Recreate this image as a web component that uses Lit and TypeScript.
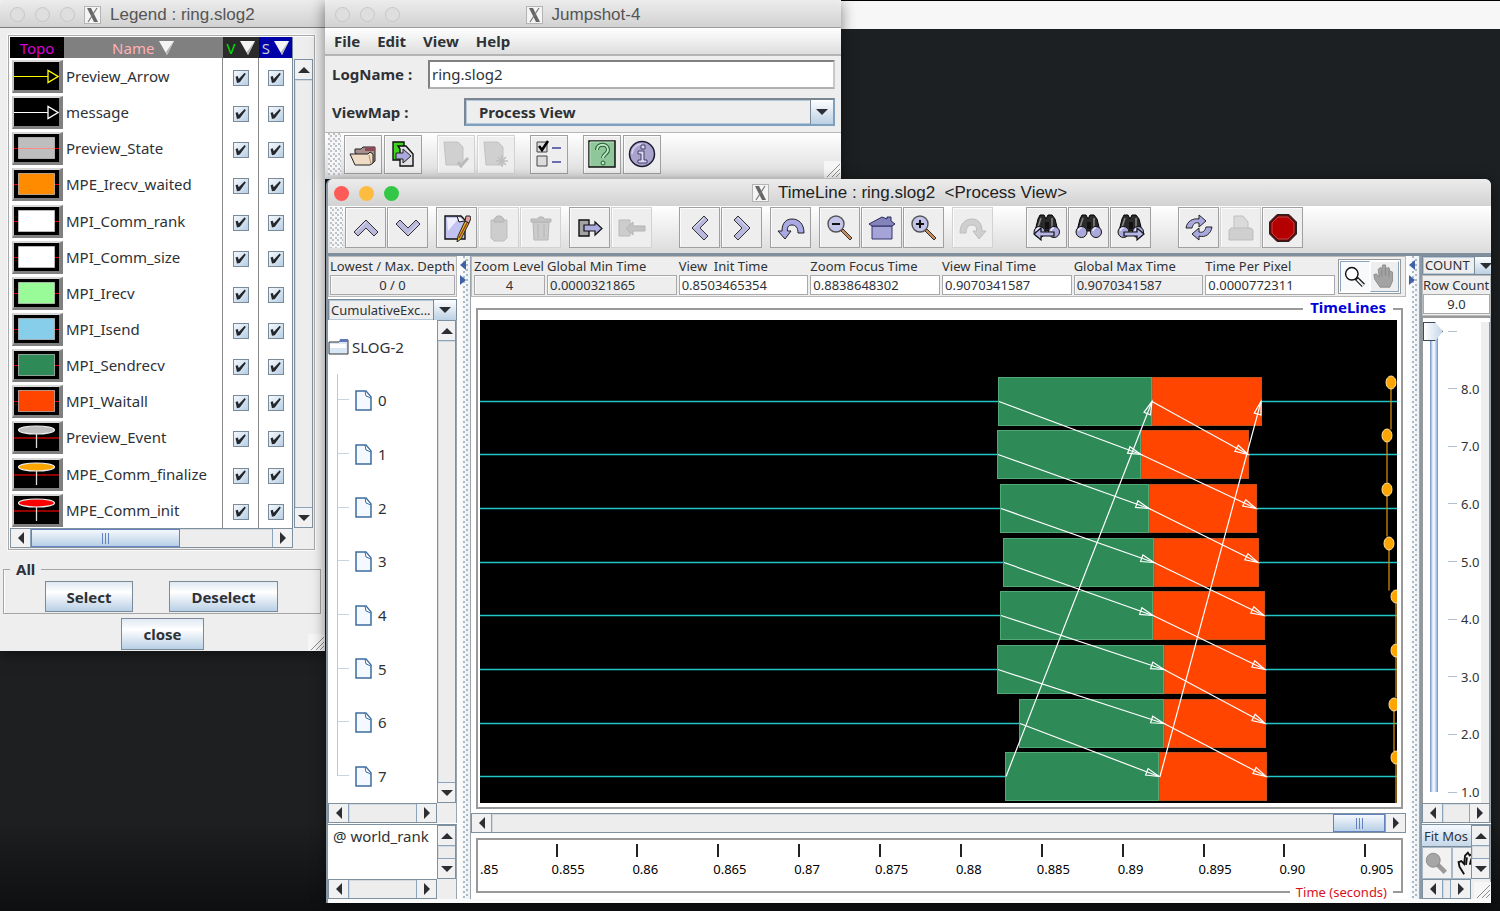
import { LitElement, html, css, svg, nothing } from "lit";
import { customElement, property } from "lit/decorators.js";
import { classMap } from "lit/directives/class-map.js";

type Kind = "arrow" | "state" | "event";
interface Category {
  name: string;
  kind: Kind;
  color: string;
}

const categories: Category[] = [
  { name: "Preview_Arrow", kind: "arrow", color: "#ffff00" },
  { name: "message", kind: "arrow", color: "#ffffff" },
  { name: "Preview_State", kind: "state", color: "#bebebe" },
  { name: "MPE_Irecv_waited", kind: "state", color: "#ff8c00" },
  { name: "MPI_Comm_rank", kind: "state", color: "#ffffff" },
  { name: "MPI_Comm_size", kind: "state", color: "#ffffff" },
  { name: "MPI_Irecv", kind: "state", color: "#98fb98" },
  { name: "MPI_Isend", kind: "state", color: "#87ceeb" },
  { name: "MPI_Sendrecv", kind: "state", color: "#2e8b57" },
  { name: "MPI_Waitall", kind: "state", color: "#ff4500" },
  { name: "Preview_Event", kind: "event", color: "#bebebe" },
  { name: "MPE_Comm_finalize", kind: "event", color: "#ffa500" },
  { name: "MPE_Comm_init", kind: "event", color: "#ff0000" },
];

/* Canvas units: 917 wide, 483 tall, nine equal rows. */
const CANVAS_W = 917;
const CANVAS_H = 483;
const ROW_H = CANVAS_H / 9;

/* Per rank: start of Sendrecv, start of Waitall, end of Waitall, position of finalize event. */
const ranks: [number, number, number, number][] = [
  [518, 672, 782, 911],
  [517, 661, 769, 907],
  [520, 669, 777, 907],
  [523, 674, 779, 909],
  [520, 673, 785, 916],
  [517, 684, 786, 916],
  [539, 684, 786, 914],
  [525, 679, 787, 916],
];

const fields = [
  { label: "Global Min Time", value: "0.0000321865", locked: true },
  { label: "View  Init Time", value: "0.8503465354", locked: false },
  { label: "Zoom Focus Time", value: "0.8838648302", locked: false },
  { label: "View Final Time", value: "0.9070341587", locked: false },
  { label: "Global Max Time", value: "0.9070341587", locked: true },
  { label: "Time Per Pixel", value: "0.0000772311", locked: false },
];

const rulerLabels = [".85", "0.855", "0.86", "0.865", "0.87", "0.875", "0.88", "0.885", "0.89", "0.895", "0.90", "0.905"];
const sliderLabels = ["", "8.0", "7.0", "6.0", "5.0", "4.0", "3.0", "2.0", "1.0"];

const binoculars = svg`
  <path d="M5 5l2-4h4l2 4 2-4h4l3 4 3 12H2z" fill="#2b2b2b" stroke="#000"/>
  <path d="M12 8h4v7h-4z" fill="#111"/><path d="M8 4L5 13M19 4v9" stroke="#8a8a8a" stroke-width="1.500"/>
  <circle cx="6.500" cy="18" r="5.500" fill="#a9a9dc" stroke="#111"/><circle cx="21" cy="18" r="5.500" fill="#a9a9dc" stroke="#111"/>
  <path d="M3.500 17a3 3 0 013-3M18 17a3 3 0 013-3" stroke="#e6e6ff" fill="none" stroke-width="1.500"/>`;

const icons: Record<string, unknown> = {
  up: svg`<path d="M2 18L14 6l12 12-4 4-8-8-8 8z" fill="#b9b9dd" stroke="#333"/><path d="M4 18L14 8" stroke="#dedef2"/>`,
  down: svg`<path d="M2 10l12 12 12-12-4-4-8 8-8-8z" fill="#b9b9dd" stroke="#333"/><path d="M14 20l10-10" stroke="#dedef2"/>`,
  back: svg`<path d="M18 2L6 14l12 12 4-4-8-8 8-8z" fill="#b9b9dd" stroke="#333"/><path d="M18 4L8 14" stroke="#dedef2"/>`,
  forward: svg`<path d="M10 2l12 12-12 12-4-4 8-8-8-8z" fill="#b9b9dd" stroke="#333"/><path d="M10 4l10 10" stroke="#dedef2"/>`,
  edit: svg`<path d="M2 2h16l4 4v19H2z" fill="#c3c3f2" stroke="#111" stroke-width="1.400"/><path d="M4 4h12L5 17z" fill="#eeeeff"/>
    <path d="M14 2l2 6 5-1" fill="#fff" stroke="#111"/><path d="M22 7l4 2-8 16-4 3 1-6z" fill="#e0bd24" stroke="#222"/>
    <path d="M22 7l1-5h4l1 2-2 5z" fill="#e6a0a0" stroke="#222"/><path d="M24 9L16 24" stroke="#a33a18" stroke-width="1.400"/>`,
  paste: svg`<path d="M6 6h16v18l-3 3H9l-3-3z" fill="#cdcdcd" stroke="#bdbdbd"/><path d="M9 8V5l3-3h4l3 3v3z" fill="#c4c4c4" stroke="#b4b4b4"/>`,
  trash: svg`<path d="M6 8h16l-1 18H7z" fill="#cbcbcb" stroke="#b6b6b6"/><path d="M4 5h7l1-2h4l1 2h7v3H4z" fill="#c4c4c4" stroke="#b4b4b4"/><path d="M11 10v14M17 10v14" stroke="#b6b6b6"/>`,
  export: svg`<path d="M3 6h10v16H3z" fill="#a3a3a3" stroke="#111" stroke-width="1.400"/><path d="M8 11h11V8l7 6.500-7 6.500v-4H8z" fill="#adade0" stroke="#111" stroke-width="1.200"/>`,
  import: svg`<path d="M1 6h11v16H1z" fill="#cdcdcd" stroke="#bababa"/><path d="M27 12H15V8l-7 6.500 7 6.500v-4h12z" fill="#c4c4c4" stroke="#b4b4b4"/>`,
  undo: svg`<path d="M1 17h4C5 9 9 5 15 5c7 0 12 5 12 14h-6c0-5-2-8-6-8s-5 3-4.500 6H14l-6 8z" fill="#a9a9e4" stroke="#222"/>`,
  redo: svg`<path d="M27 17h-4C23 9 19 5 13 5 6 5 1 10 1 19h6c0-5 2-8 6-8s5 3 4.500 6H14l6 8z" fill="#cfcfcf" stroke="#bdbdbd"/>`,
  zoomOut: svg`<path d="M15 17l2-2 9 9-2 2z" fill="#c98a5a" stroke="#333"/><circle cx="10" cy="10" r="8" fill="#c4c4ea" stroke="#555" stroke-width="1.400"/><path d="M6 10h8" stroke="#111" stroke-width="2"/>`,
  zoomIn: svg`<path d="M15 17l2-2 9 9-2 2z" fill="#c98a5a" stroke="#333"/><circle cx="10" cy="10" r="8" fill="#c4c4ea" stroke="#555" stroke-width="1.400"/><path d="M6 10h8M10 6v8" stroke="#111" stroke-width="2"/>`,
  home: svg`<path d="M4 12h20v13H4z" fill="#a4a4d8" stroke="#35356c"/><path d="M1 10L14 3l5 2V3h4v4l4 3-3 2H4z" fill="#8484bd" stroke="#2b2b5c"/>`,
  find: binoculars,
  findBack: svg`${binoculars}<path d="M1 20l7-6v4h13v4H8v4z" fill="#b6b6e8" stroke="#111" stroke-width="1.200"/>`,
  findNext: svg`${binoculars}<path d="M27 20l-7-6v4H7v4h13v4z" fill="#b6b6e8" stroke="#111" stroke-width="1.200"/>`,
  refresh: svg`<path d="M1 14C2 7 8 4 14 5V1l7 6-7 6V9c-4-1-6 1-7 5z" fill="#a9a9e0" stroke="#222"/><path d="M27 13c-1 7-7 11-13 9v4l-7-6 7-6v4c4 1 6-1 7-5z" fill="#a9a9e0" stroke="#222"/>`,
  print: svg`<path d="M7 15V2h9l5 6v7" fill="#dadada" stroke="#c0c0c0"/><path d="M2 16l2-2h20l2 2v10H2z" fill="#cfcfcf" stroke="#bdbdbd"/>`,
  stop: svg`<path d="M8 .5h12L27.500 8v12L20 27.500H8L.5 20V8z" fill="#5a0a0a" stroke="#222"/><path d="M9 3h10l6 6v10l-6 6H9l-6-6V9z" fill="#b40000" stroke="#c44"/>`,
  open: svg`<path d="M6 13V9h6l2-2h12v14l-3 3z" fill="#a8918c" stroke="#222"/><path d="M16 7h10v4H16z" fill="#8a4a58"/><path d="M1 14h18l2-2 3 2v9l-3 2H6z" fill="#f0dcc4" stroke="#222"/><path d="M20 15l2 9" stroke="#b58f70"/>`,
  copy: svg`<path d="M4 2h11v18H4z" fill="#41d41c" stroke="#111" stroke-width="1.400"/><path d="M9 6h8l7 8v12H11V9z" fill="#e2e2e2" stroke="#111" stroke-width="1.400"/><path d="M7 13h7V9l8 7-8 7v-4H7z" fill="#a9a9dd" stroke="#222"/>`,
  docCheck: svg`<path d="M2 2h14l5 5v18H4z" fill="#d0d0d0" stroke="#c2c2c2"/><path d="M16 22l3 4 7-8" stroke="#bbb" stroke-width="3" fill="none"/>`,
  docStar: svg`<path d="M2 2h14l5 5v18H4z" fill="#d0d0d0" stroke="#c2c2c2"/><path d="M20 15v12M14 21h12M16 17l8 8M24 17l-8 8" stroke="#bfbfbf" stroke-width="1.600"/>`,
  prefs: svg`<path d="M2 2h10v10H2zM2 16h10v10H2z" fill="#dcdcdc" stroke="#444"/><path d="M4 6l3 4 6-9" stroke="#000" stroke-width="2.500" fill="none"/><path d="M17 8h9M17 22h9" stroke="#6c6cae" stroke-width="2"/>`,
  help: svg`<path d="M1 1h26v26H1z" fill="#8fc79a" stroke="#111" stroke-width="1.500"/><path d="M2 26V2h24" stroke="#b8e2bf" fill="none"/><path d="M9 10c0-7 11-7 11 0 0 4-5 4-5 8" stroke="#245c34" stroke-width="4" fill="none"/><path d="M9 10c0-7 11-7 11 0 0 4-5 4-5 8" stroke="#bfe8c6" stroke-width="2" fill="none"/><circle cx="15" cy="23" r="2" fill="#bfe8c6" stroke="#245c34"/>`,
  info: svg`<circle cx="14" cy="14" r="12.500" fill="#aaa4cc" stroke="#1c1c33" stroke-width="1.500"/><path d="M4 14a10 10 0 0110-10" stroke="#d6d2ee" fill="none" stroke-width="1.500"/><path d="M10 11h6v9h3v3h-9v-3h3v-6h-3zM13 5h4v4h-4z" fill="#d9d6ef" stroke="#44406a"/>`,
  lens: svg`<path d="M16 16l8 8" stroke="#111" stroke-width="5"/><path d="M17 17l7 7" stroke="#eee" stroke-width="2.500"/><circle cx="11" cy="11" r="7" fill="#fff" stroke="#111" stroke-width="1.600"/>`,
  lensOff: svg`<path d="M15 15l9 9" stroke="#999" stroke-width="5"/><circle cx="11" cy="11" r="7.500" fill="#a6a6a6" stroke="#888"/>`,
  hand: svg`<path d="M9 26l-6-9-1-5 3-1 3 4-1-9 2-2 2 1 1-4h3l1 4 3-1 1 4 3 1v10l-3 7z" fill="#a3a3a3" stroke="#8a8a8a"/><path d="M11 6v8M15 4v9M19 7v7" stroke="#858585"/>`,
  grab: svg`<path d="M12 26l-5-8-1-5 3-1 3 3 1-9 3-3 2 3 3-2 1 4" fill="none" stroke="#111" stroke-width="2"/><path d="M15 8l-1 8M20 9l-2 7" stroke="#111" stroke-width="2"/>`,
};

const icon = (name: string, size = 28) =>
  html`<svg class="glyph" width=${size} height=${size} viewBox="0 0 28 28" aria-hidden="true">${icons[name]}</svg>`;

const triangle = (dir: "up" | "down" | "left" | "right") => {
  const d = { up: "M0 7L6 1l6 6z", down: "M0 1h12L6 7z", left: "M7 0v12L1 6z", right: "M1 0l6 6-6 6z" }[dir];
  const flat = dir === "up" || dir === "down";
  return html`<svg width=${flat ? 12 : 8} height=${flat ? 8 : 12} aria-hidden="true"><path d=${d} fill="#2b2f33" /></svg>`;
};

const xBadge = html`<svg class="badge" width="17" height="18" viewBox="0 0 17 18" aria-hidden="true">
  <rect x=".5" y=".5" width="16" height="17" fill="#f4f4f4" stroke="#b4b4b4" />
  <path d="M3 2h4l7 14h-4z" fill="#666" /><path d="M13 2L4 16" stroke="#777" stroke-width="1.200" />
</svg>`;

const grip = html`<svg class="grip" width="17" height="17" viewBox="0 0 17 17" aria-hidden="true">
  <rect width="17" height="17" fill="#f6f6f6" /><path d="M3 16L16 3M8 16l8-8M12 16l4-4" stroke="#8c8c8c" />
</svg>`;

@customElement("metal-scrollbar")
class MetalScrollbar extends LitElement {
  @property({ type: Boolean, reflect: true }) vertical = false;
  @property({ type: Number }) start = 0;
  @property({ type: Number }) size = 0;
  static styles = css`
    :host { display: flex; box-sizing: border-box; min-width: 0; min-height: 0; height: 20px; border: 1px solid #7f909f; background: #ededed; }
    :host([vertical]) { flex-direction: column; width: 19px; height: auto; }
    button { flex: none; display: flex; align-items: center; justify-content: center; padding: 0; border: 0; background: #f1f1f1; width: 19px; height: 18px; }
    :host([vertical]) button { width: 17px; height: 19px; }
    .track { flex: 1; display: flex; min-width: 0; min-height: 0; border: 0 solid #8aa4be; border-width: 0 1px; box-shadow: inset 1px 1px 0 #d4d9de; }
    :host([vertical]) .track { flex-direction: column; border-width: 1px 0; }
    .thumb { box-sizing: border-box; border: 1px solid #6382bf; background: linear-gradient(#f4f8fd, #b8cfe5); display: flex; align-items: center; justify-content: center; gap: 2px; }
    .thumb i { width: 1px; height: 11px; background: #6382bf; }
  `;
  render() {
    const v = this.vertical;
    return html`
      <button aria-label=${v ? "Scroll up" : "Scroll left"}>${triangle(v ? "up" : "left")}</button>
      <div class="track">
        ${this.size
          ? html`<div class="thumb" style="margin-left:${this.start}%;width:${this.size}%"><i></i><i></i><i></i></div>`
          : nothing}
      </div>
      <button aria-label=${v ? "Scroll down" : "Scroll right"}>${triangle(v ? "down" : "right")}</button>
    `;
  }
}

const base = css`
  * { box-sizing: border-box; }
  :host { font: 15px/20px "Noto Sans", sans-serif; color: #2e3236; }
  button, input, select { font: inherit; color: inherit; margin: 0; border-radius: 0; }
  svg { display: block; flex: none; }
  .title { display: flex; align-items: center; height: 28px; background: linear-gradient(#ececec, #d2d2d2); border-bottom: 1px solid #9c9c9c; border-radius: 6px 6px 0 0; font: 17px/20px "Liberation Sans", sans-serif; color: #555; padding: 2px 10px 0; }
  .title h1 { flex: 1; display: flex; align-items: center; justify-content: center; gap: 9px; margin: 0 65px 0 0; font: inherit; white-space: pre; }
  .lights { display: flex; gap: 10px; }
  .lights i { width: 15px; height: 15px; border-radius: 50%; border: 1px solid #c6c6c6; background: #dedede; }
  .tool { display: flex; align-items: center; justify-content: center; padding: 0; border: 1px solid #a0a0a0; background: #eee; box-shadow: inset 1px 1px 0 #fbfbfb; }
  .tool:disabled { border-color: #d2d2d2; }
  .handle { background: radial-gradient(circle at 1px 1px, #bcc2c8 0 1px, transparent 1px) 0 0 / 5px 5px, radial-gradient(circle at 1px 1px, #bcc2c8 0 1px, transparent 1px) 2px 2px / 5px 5px, #f6f6f6; }
  .combo { display: grid; grid-template-columns: 1fr 23px; border: 1px solid #7a8a99; }
  .combo select { grid-area: 1 / 1 / 2 / 3; min-width: 0; appearance: none; border: 1px solid #b4c8dc; background: #eee; }
  .combo span { grid-area: 1 / 2; display: flex; align-items: center; justify-content: center; border-left: 1px solid #7a8a99; background: linear-gradient(#fdfeff, #bcd0e4); pointer-events: none; z-index: 1; }
`;

@customElement("legend-window")
class LegendWindow extends LitElement {
  static styles = [
    base,
    css`
      :host { display: flex; flex-direction: column; background: #eee; }
      .title { border-bottom-color: #7c7c7c; }
      .title h1 { justify-content: flex-start; margin: 0; padding-left: 9px; }
      .pane { margin: 7px 10px 0 8px; padding: 1px; border: 1px solid #a9a9a9; box-shadow: inset 1px 1px 0 #fff, 0 0 0 1px #fafafa; display: grid; grid-template-columns: 1fr 19px; column-gap: 1px; }
      table { height: 491px; width: 100%; border-collapse: collapse; table-layout: fixed; background: #fff; border-right: 1px solid #7a8a99; }
      th, td { padding: 0; font-weight: 400; text-align: left; white-space: nowrap; }
      th { height: 21px; }
      th div { display: flex; align-items: center; justify-content: center; height: 21px; gap: 5px; }
      .h-topo { width: 54px; background: #000; color: #d800d8; }
      .h-name { background: #808080; color: #ffb0b6; }
      .h-v { width: 36px; background: #2b2b2b; color: #00e000; }
      .h-s { width: 34px; background: #0000a8; color: #ccc; }
      .h-v div, .h-s div { gap: 4px; }
      .topo { display: block; margin: 1px 0 0 2px; padding: 0; width: 51px; height: 33px; border: 2px solid; border-color: #d8d8d8 #808080 #808080 #c4c4c4; border-right-width: 4px; border-bottom-width: 3px; background: #000; }
      td.name { padding-left: 2px; border-right: 1px solid #8a8a8a; }
      td.v { border-right: 1px solid #8a8a8a; }
      td.v, td.s { text-align: center; }
      .tick { appearance: none; display: inline-grid; place-content: center; vertical-align: middle; width: 16px; height: 16px; border: 1px solid #7a8a99; outline: 0; background: linear-gradient(135deg, #f4f8fc, #b8cfe5); }
      .tick:checked::before { content: ""; width: 11px; height: 11px; background: #23272b; clip-path: polygon(5% 38%, 25% 32%, 34% 58%, 88% 2%, 98% 14%, 44% 88%, 18% 94%); }
      .side { margin-top: 22px; }
      fieldset { margin: 9px 4px 0 3px; padding: 2px 42px 3px 41px; border: 1px solid #a5a5a5; box-shadow: inset 1px 0 0 #fff; display: flex; justify-content: space-between; height: 55px; min-width: 0; }
      legend { margin-left: -35px; padding: 0 6px; font-weight: 700; }
      .push { height: 31px; border: 1px solid #7a8a99; background: linear-gradient(#dfe9f3, #fff 35%, #b8cfe5); font-weight: 700; padding: 0; }
      .w-select { width: 88px; }
      .w-deselect { width: 109px; }
      .foot { display: flex; justify-content: center; margin-top: 4px; height: 33px; position: relative; }
      .w-close { width: 83px; height: 32px; }
      .grip { position: absolute; right: 0; bottom: 0; }
    `,
  ];
  private topo(c: Category) {
    if (c.kind === "arrow")
      return svg`<path d="M0 14.500h34" stroke=${c.color}/><path d="M34 8.500v12l10-6z" fill="none" stroke=${c.color} stroke-width="1.300"/>`;
    if (c.kind === "state")
      return svg`<path d="M0 14.500h45" stroke="#e00000"/><rect x="4.500" y="3.500" width="36" height="21" fill=${c.color} stroke="#ddd" stroke-opacity=".6"/>${
        c.name === "Preview_State" ? svg`<path d="M4 14.500h37" stroke="#ff8a8a"/>` : nothing
      }`;
    return svg`<path d="M0 15h45" stroke="#c00000" stroke-width="1.500"/><path d="M22.500 8v17" stroke="#ddd" stroke-width="1.300"/><ellipse cx="22.500" cy="7" rx="18" ry="4" fill=${c.color} stroke="#eee" stroke-width="1.200"/>`;
  }
  private sorter() {
    return html`<svg width="15" height="14" aria-hidden="true"><path d="M0 0h15L8 14z" fill="#f4f4f4" /><path d="M15 0L8 14l-1-3z" fill="#b0b0b0" /></svg>`;
  }
  render() {
    return html`
      <div class="title"><div class="lights"><i></i><i></i><i></i></div><h1>${xBadge}Legend : ring.slog2</h1></div>
      <div class="pane">
        <table>
          <thead>
            <tr>
              <th class="h-topo"><div>Topo</div></th>
              <th class="h-name"><div>Name ${this.sorter()}</div></th>
              <th class="h-v"><div>V ${this.sorter()}</div></th>
              <th class="h-s"><div>S ${this.sorter()}</div></th>
            </tr>
          </thead>
          <tbody>
            ${categories.map(
              (c) => html`<tr>
                <td><button class="topo" aria-label="Color of ${c.name}"><svg width="45" height="28">${this.topo(c)}</svg></button></td>
                <td class="name">${c.name}</td>
                <td class="v"><input class="tick" type="checkbox" checked aria-label="${c.name} visible" /></td>
                <td class="s"><input class="tick" type="checkbox" checked aria-label="${c.name} searchable" /></td>
              </tr>`
            )}
          </tbody>
        </table>
        <metal-scrollbar class="side" vertical></metal-scrollbar>
        <metal-scrollbar .start=${0} .size=${62}></metal-scrollbar>
      </div>
      <fieldset>
        <legend>All</legend>
        <button class="push w-select">Select</button><button class="push w-deselect">Deselect</button>
      </fieldset>
      <div class="foot"><button class="push w-close">close</button>${grip}</div>
    `;
  }
}

@customElement("main-window")
class MainWindow extends LitElement {
  static styles = [
    base,
    css`
      :host { display: flex; flex-direction: column; background: #eee; font-weight: 700; }
      nav { display: flex; gap: 17px; height: 28px; padding: 0 7px 0 9px; background: linear-gradient(#fff, #dedede); border-bottom: 2px solid #b4b4b4; }
      nav button { padding: 0; border: 0; background: none; }
      .row { display: flex; align-items: center; padding: 0 6px 0 7px; }
      .log { height: 36px; }
      .log label { width: 96px; }
      .log input { flex: 1; min-width: 0; height: 29px; padding: 0 2px; border: 2px solid; border-color: #808080 #c8c8c8 #b0b0b0 #808080; background: #fff; font-weight: 400; }
      .view { height: 40px; }
      .view label { width: 132px; }
      .view .combo { flex: 1; height: 28px; border: 2px solid; border-color: #7c8690 #7f9fbf #7f9fbf #7c8690; }
      .view select { font-weight: 700; padding: 0 12px; }
      .bar { display: flex; align-items: center; gap: 2px; height: 47px; border-top: 1px solid #b6b6b6; background: linear-gradient(#fff, #dadada); padding: 0 0 4px 3px; position: relative; }
      .handle { width: 13px; align-self: stretch; margin-right: 1px; }
      .tool { width: 38px; height: 39px; }
      .gap { width: 11px; }
      .grip { position: absolute; right: 0; bottom: 1px; }
    `,
  ];
  private tool(name: string, label: string, disabled = false) {
    return html`<button class="tool" aria-label=${label} ?disabled=${disabled}>${icon(name)}</button>`;
  }
  render() {
    return html`
      <div class="title"><div class="lights"><i></i><i></i><i></i></div><h1>${xBadge}Jumpshot-4</h1></div>
      <nav><button>File</button><button>Edit</button><button>View</button><button>Help</button></nav>
      <div class="row log"><label for="log">LogName :</label><input id="log" value="ring.slog2" /></div>
      <div class="row view">
        <label for="map">ViewMap :</label>
        <div class="combo"><select id="map"><option>Process View</option></select><span>${triangle("down")}</span></div>
      </div>
      <div class="bar">
        <div class="handle"></div>
        ${this.tool("open", "Open log")}${this.tool("copy", "Convert log")}
        <div class="gap"></div>
        ${this.tool("docCheck", "Show timeline", true)}${this.tool("docStar", "Show legend", true)}
        <div class="gap"></div>
        ${this.tool("prefs", "Preferences")}
        <div class="gap"></div>
        ${this.tool("help", "Manual")}${this.tool("info", "About")}
        ${grip}
      </div>
    `;
  }
}

type Tool = [string, string, boolean?];
const toolGroups: { tools: Tool[]; space?: "far" | "wide" }[] = [
  { tools: [["up", "Up"], ["down", "Down"]] },
  { tools: [["edit", "Mark"], ["paste", "Move", true], ["trash", "Delete", true]] },
  { tools: [["export", "Expand"], ["import", "Collapse", true]] },
  { tools: [["back", "Backward"], ["forward", "Forward"]], space: "far" },
  { tools: [["undo", "Undo"]] },
  { tools: [["zoomOut", "Zoom out"], ["home", "Zoom home"], ["zoomIn", "Zoom in"]] },
  { tools: [["redo", "Redo", true]] },
  { tools: [["findBack", "Search backward"], ["find", "Search"], ["findNext", "Search forward"]], space: "wide" },
  { tools: [["refresh", "Redraw"], ["print", "Print", true], ["stop", "Exit"]], space: "far" },
];

@customElement("timeline-window")
class TimelineWindow extends LitElement {
  static styles = [
    base,
    css`
      :host { display: flex; flex-direction: column; background: #eee; border-left: 2px solid #8896a3; font-size: 13px; line-height: 18px; border-radius: 6px 6px 0 0; overflow: hidden; }
      .title { height: 27px; color: #222; border: 0; padding: 1px 6px 0; flex: none; }
      .lights i { border-color: transparent; }
      .lights i:nth-child(1) { background: #fc5b57; }
      .lights i:nth-child(2) { background: #fdbc40; }
      .lights i:nth-child(3) { background: #33c748; }
      .bar { flex: none; display: flex; gap: 8px; height: 47px; padding: 1px 0 5px 2px; background: linear-gradient(#fff, #dcdcdc); }
      .handle.lead { width: 13px; margin-right: -6px; }
      .group { display: flex; gap: 1px; }
      .group.far { margin-left: 19px; }
      .group.wide { margin-left: 25px; }
      .bar .tool { width: 41px; height: 41px; }
      .body { flex: 1; min-height: 0; display: grid; grid-template-columns: 129px 14px minmax(0, 1fr) 14px 71px; border-top: 3px solid #7f8f9e; border-bottom: 4px solid #fafafa; background: #fff; }
      .col { display: flex; flex-direction: column; min-width: 0; min-height: 0; }
      .info { background: #eee; border: 1px solid #b9b9b9; height: 41px; flex: none; }
      .info label { display: block; height: 18px; white-space: pre; }
      .field { display: block; width: 100%; min-width: 0; height: 20px; padding: 0 2px; border: 1px solid #a9a9a9; background: #fff; outline: 0; }
      .field.locked { background: #eee; box-shadow: inset 1px 1px 0 #fafafa; }
      .field.mid { text-align: center; }
      .left .info, .right .info { padding: 0 1px; }
      .combo { flex: none; height: 21px; margin-top: 2px; }
      .combo select { padding: 0 1px; font-size: 13px; }
      .view { flex: 1; display: grid; grid-template-columns: minmax(0, 1fr) 19px; grid-template-rows: minmax(0, 1fr) 20px; min-height: 0; background: #eee; border-right: 1px solid #9aa5b0; }
      .view .paper { background: #fff; overflow: hidden; }
      .small { flex: none; height: 75px; margin-top: 1px; border-top: 1px solid #7f909f; font-size: 15px; }
      .small p { margin: 0; padding: 2px 5px 0; white-space: nowrap; }
      .tree { display: grid; grid-auto-rows: 1fr; margin: 0; padding: 0; list-style: none; font-size: 15px; }
      .tree li { display: flex; align-items: center; gap: 2px; }
      .tree .leaf { padding-left: 9px; gap: 6px; }
      .tree .branch { align-self: stretch; width: 12px; display: grid; grid-template-rows: 1fr 1fr; border-left: 1px solid #b4cbe4; }
      .tree .branch i { border-bottom: 1px solid #c8d4e0; }
      .tree .leaf:last-child .branch { border-left: 0; }
      .tree .leaf:last-child .branch i { border-left: 1px solid #b4cbe4; }
      .split { border-right: 1px solid #9aa5b0; background: radial-gradient(circle at 1px 1px, #a9b8c5 0 1px, transparent 1px) 6px 0 / 20px 5px, radial-gradient(circle at 1px 1px, #a9b8c5 0 1px, transparent 1px) 9px 3px / 20px 5px, linear-gradient(90deg, #fff, #eef1f4); }
      .split div { display: grid; gap: 5px; padding: 4px 2px; }
      .mid-info { display: flex; padding: 0 4px 0 2px; }
      .cells { flex: 1; min-width: 0; display: grid; grid-template-columns: 71px repeat(6, minmax(0, 1fr)); gap: 2px; }
      .modes { display: flex; width: 63px; height: 35px; margin: 2px 0 0 3px; padding: 1px; border: 1px solid #999; background: #fff; }
      .modes button { flex: 1; padding: 0; display: grid; place-items: center; border: 1px solid; border-color: #fff #8aa4be #8aa4be #fff; background: #eee; }
      .modes .on { border-color: #8aa4be #fff #fff #8aa4be; background: #f7f9fb; }
      .stage { flex: 1; min-height: 0; margin: 11px 3px 4px 5px; padding: 10px 4px 4px 2px; border: 2px solid #999; display: grid; grid-template: minmax(0, 1fr) / minmax(0, 1fr); }
      .stage h2 { grid-area: 1 / 1; justify-self: end; align-self: start; margin: -22px 4px 0 0; padding: 0 7px; font-size: 15px; line-height: 18px; color: #0000d8; background: #fff; z-index: 1; }
      .stage svg { grid-area: 1 / 1; width: 100%; height: 100%; background: #000; }
      .ruler { flex: none; margin: 5px 3px 6px 5px; height: 55px; padding: 4px 4px 0 2px; border: 2px solid #999; display: flex; flex-direction: column; justify-content: space-between; }
      .marks { display: flex; overflow: hidden; color: #000; }
      .marks div { flex: none; width: 8.82%; }
      .marks div:first-child { width: 7.8%; }
      .marks i { display: block; width: 2px; height: 13px; margin-left: 4px; background: #222; }
      .marks div:first-child i { visibility: hidden; }
      .marks span { display: block; margin-top: 3px; }
      .unit { align-self: flex-end; margin: 0 4px -9px 0; padding: 0 6px; background: #fff; color: #d8101c; line-height: 16px; }
      .right { border-left: 2px solid #8a99a6; overflow: hidden; }
      .right .combo { height: 19px; margin: 0; width: 76px; }
      .right .combo select { padding: 0 1px; line-height: 15px; }
      .right .info { padding: 0; }
      .gauge { display: flex; height: 100%; padding-top: 4px; border-left: 1px solid #999; border-top: 2px solid #999; }
      .gauge input { appearance: none; writing-mode: vertical-lr; direction: rtl; width: 20px; height: auto; margin: 0 0 2px; background: linear-gradient(90deg, #6d8fc8, #d7e4f4 30%, #fff 50%, #a9c1e6 80%, #6d8fc8) 7px 50% / 8px calc(100% - 18px) no-repeat; }
      .gauge input::-webkit-slider-thumb { appearance: none; width: 20px; height: 19px; background: linear-gradient(90deg, #fff, #c5d6e8); border: 1px solid #3d4a58; clip-path: polygon(0 0, 60% 0, 100% 50%, 60% 100%, 0 100%); }
      .scale { flex: 1; display: flex; flex-direction: column; justify-content: space-between; padding: 0 0 2px 5px; }
      .scale div { display: flex; align-items: center; gap: 4px; height: 18px; }
      .scale i { width: 9px; height: 1px; background: #b3c0cc; }
      .edge { width: 9px; background: #eee; border-right: 1px solid #999; }
      .wide-cell { grid-column: 1 / 3; }
      .fit { display: flex; flex-direction: column; }
      .fit b { flex: none; height: 22px; padding: 0 2px; font-weight: 400; font-size: 13px; line-height: 22px; white-space: nowrap; background: linear-gradient(#f5f9fd, #c5d7e9); border-bottom: 1px solid #7a8a99; }
      .fit div { display: flex; flex: 1; }
      .fit button { flex: none; width: 30px; padding: 0; border: 1px solid #a9b8c6; background: #f2f2f2; }
      .grip { position: absolute; right: 0; bottom: 4px; }
    `,
  ];

  private y(row: number) {
    return Math.round((row + 1.5) * ROW_H) + 0.5;
  }
  private message(x1: number, r1: number, x2: number, r2: number) {
    const y1 = this.y(r1), y2 = this.y(r2);
    const a = Math.atan2(y2 - y1, x2 - x1);
    const px = (d: number, s: number) =>
      `${(x2 - d * Math.cos(a) - s * Math.sin(a)).toFixed(1)} ${(y2 - d * Math.sin(a) + s * Math.cos(a)).toFixed(1)}`;
    return svg`<path d="M${x1} ${y1}L${x2} ${y2}"/><path d="M${x2} ${y2}L${px(13, 3.5)}L${px(13, -3.5)}z"/>`;
  }
  private chart() {
    const last = ranks.length - 1;
    return html`<svg viewBox="0 0 ${CANVAS_W} ${CANVAS_H}" preserveAspectRatio="none" role="img" aria-label="Timelines of ranks 0 to 7">
      ${ranks.map(([a, b, c], i) => {
        const y = this.y(i);
        return svg`<path d="M0 ${y}H${CANVAS_W}" stroke="#22c4c4" stroke-width="1.500"/>
          <rect x=${a + 0.5} y=${y - 24} width=${b - a - 1} height="48" fill="#2e8b57" stroke="#52a877"/>
          <rect x=${b + 0.5} y=${y - 24} width=${c - b - 1} height="48" fill="#ff4500" stroke="#c8501c"/>`;
      })}
      <g fill="none" stroke="#fff" stroke-width="1.200">
        ${ranks.slice(0, last).map(([a, b], i) => [
          this.message(a + 1, i, ranks[i + 1][1], i + 1),
          this.message(b, i, ranks[i + 1][2] - 1, i + 1),
        ])}
        ${this.message(ranks[last][0] + 1, last, ranks[0][1], 0)}
        ${this.message(ranks[last][1] + 1, last, ranks[0][2] - 1, 0)}
      </g>
      ${ranks.map(([, , , x], i) => {
        const y = this.y(i) - 19;
        return svg`<path d="M${x} ${y}v47" stroke="#d08a10" stroke-width="1.300"/><ellipse cx=${x} cy=${y} rx="5" ry="6.500" fill="#ffa500" stroke="#ffe0a0"/>`;
      })}
    </svg>`;
  }
  private splitter() {
    return html`<div class="split"><div>
      <svg width="8" height="10"><path d="M7 0v10L1 5z" fill="#4060a8" /></svg>
      <svg width="8" height="10"><path d="M1 0v10l6-5z" fill="#4060a8" /></svg>
    </div></div>`;
  }
  render() {
    return html`
      <div class="title"><div class="lights"><i></i><i></i><i></i></div><h1>${xBadge}TimeLine : ring.slog2  &lt;Process View&gt;</h1></div>
      <div class="bar">
        <div class="handle lead"></div>
        ${toolGroups.map(
          (g) => html`<div class=${classMap({ group: true, far: g.space === "far", wide: g.space === "wide" })}>
            ${g.tools.map(([n, l, off]) => html`<button class="tool" aria-label=${l} ?disabled=${!!off}>${icon(n)}</button>`)}
          </div>`
        )}
      </div>
      <div class="body">
        <div class="col left">
          <div class="info"><label for="depth">Lowest / Max. Depth</label><input id="depth" class="field locked mid" readonly value="0 / 0" /></div>
          <div class="combo"><select aria-label="Preview mode"><option>CumulativeExc...</option></select><span>${triangle("down")}</span></div>
          <div class="view">
            <ul class="paper tree">
              <li>
                <svg width="22" height="18" aria-hidden="true"><path d="M1 4h10l2-2h7v14H1z" fill="#d9e7f5" stroke="#333" /><path d="M12 1h8v3h-9z" fill="#6078b8" /><path d="M2 6h16v4H2z" fill="#fff" /></svg>
                SLOG-2
              </li>
              ${ranks.map(
                (_, i) => html`<li class="leaf">
                  <span class="branch"><i></i></span>
                  <svg width="17" height="21" aria-hidden="true"><path d="M1 1h10l5 6v13H1z" fill="#f4f9ff" stroke="#3c6ca0" stroke-width="1.500" /><path d="M10 1l1 5 5 2" fill="#fff" stroke="#3c6ca0" /></svg>
                  ${i}
                </li>`
              )}
            </ul>
            <metal-scrollbar vertical></metal-scrollbar>
            <metal-scrollbar></metal-scrollbar>
          </div>
          <div class="view small">
            <div class="paper"><p>@ world_rank</p></div>
            <metal-scrollbar vertical></metal-scrollbar>
            <metal-scrollbar></metal-scrollbar>
          </div>
        </div>
        ${this.splitter()}
        <div class="col">
          <div class="info mid-info">
            <div class="cells">
              <div><label for="zoom">Zoom Level</label><input id="zoom" class="field locked mid" readonly value="4" /></div>
              ${fields.map(
                (f, i) => html`<div>
                  <label for="f${i}">${f.label}</label>
                  <input id="f${i}" class=${classMap({ field: true, locked: f.locked })} ?readonly=${f.locked} value=${f.value} />
                </div>`
              )}
            </div>
            <div class="modes"><button class="on" aria-label="Zoom mode">${icon("lens", 25)}</button><button aria-label="Drag mode">${icon("hand", 25)}</button></div>
          </div>
          <div class="stage"><h2>TimeLines</h2>${this.chart()}</div>
          <metal-scrollbar .start=${94.2} .size=${6}></metal-scrollbar>
          <div class="ruler">
            <div class="marks">${rulerLabels.map((t) => html`<div><i></i><span>${t}</span></div>`)}</div>
            <div class="unit">Time (seconds)</div>
          </div>
        </div>
        ${this.splitter()}
        <div class="col right">
          <div class="combo"><select aria-label="Row unit"><option>COUNT</option></select><span>${triangle("down")}</span></div>
          <div class="info"><label for="rows">Row Count</label><input id="rows" class="field mid" value="9.0" /></div>
          <div class="view">
            <div class="paper wide-cell">
              <div class="gauge">
                <input type="range" min="1" max="9" step="0.1" value="9" aria-label="Visible rows" />
                <div class="scale">${sliderLabels.map((t) => html`<div><i></i>${t}</div>`)}</div>
                <div class="edge"></div>
              </div>
            </div>
            <metal-scrollbar class="wide-cell"></metal-scrollbar>
          </div>
          <div class="view small">
            <div class="paper fit"><b>Fit Mos</b><div><button aria-label="Fit most rows">${icon("lensOff", 26)}</button><button aria-label="Grab">${icon("grab", 26)}</button></div></div>
            <metal-scrollbar vertical></metal-scrollbar>
            <metal-scrollbar></metal-scrollbar>
          </div>
        </div>
      </div>
      ${grip}
    `;
  }
}

@customElement("app-root")
class AppRoot extends LitElement {
  static styles = css`
    :host { display: block; position: relative; height: 100vh; min-height: 640px; overflow: hidden; background: linear-gradient(#1d2022, #1d1f21 90%, #0e0f10); }
    .menubar { height: 28px; background: #f7f7f7; border-top: 1px solid #000; }
    legend-window, main-window, timeline-window { position: absolute; box-shadow: 0 3px 14px rgba(0, 0, 0, 0.5); }
    legend-window { left: 0; top: 0; width: 325px; }
    main-window { left: 325px; top: 0; width: 516px; }
    timeline-window { left: 326px; right: 9px; top: 179px; bottom: 8px; }
  `;
  render() {
    return html`<div class="menubar"></div>
      <legend-window></legend-window>
      <main-window></main-window>
      <timeline-window></timeline-window>`;
  }
}
